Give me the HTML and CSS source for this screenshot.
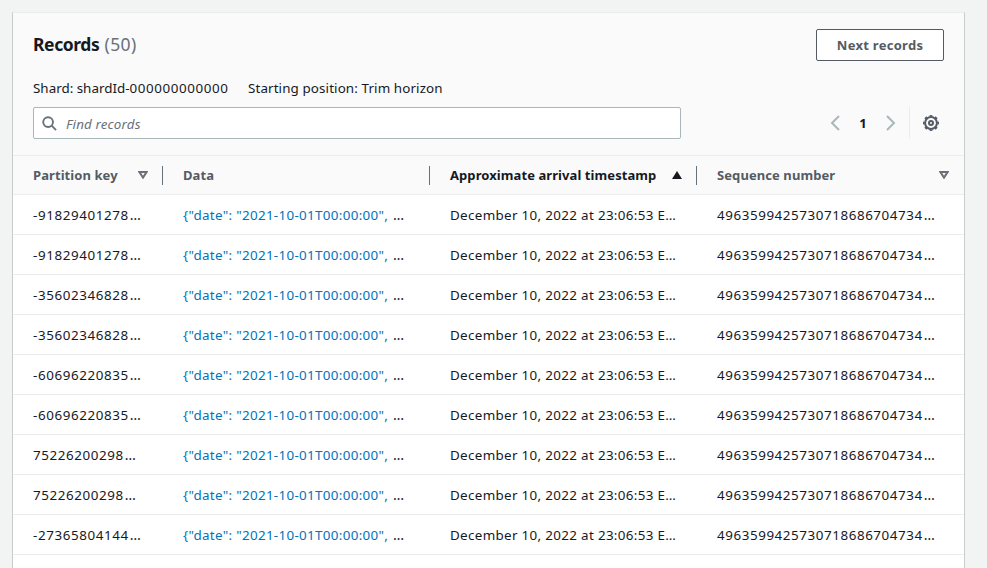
FILE: index.html
```html
<!DOCTYPE html>
<html lang="en">
<head>
<meta charset="utf-8">
<title>Records</title>
<link rel="stylesheet" href="styles.css">
</head>
<body>
<main class="card">
  <header class="head">
    <div class="title-row">
      <h2 class="title">Records <span class="count">(50)</span></h2>
      <button class="next">Next records</button>
    </div>
    <div class="info"><span class="shard">Shard: shardId-<span class="digits">000000000000</span></span><span class="position">Starting position: Trim horizon</span></div>
    <div class="tools">
      <div class="search">
        <svg class="lens" viewBox="0 0 16 16"><circle cx="6.5" cy="6.5" r="5.2"/><path d="M10.3 10.3 15 15"/></svg>
        <span class="placeholder">Find records</span>
      </div>
      <nav class="pages">
        <svg class="arrow" viewBox="0 0 10 16"><path d="M9 1 2 8l7 7"/></svg>
        <b class="page">1</b>
        <svg class="arrow" viewBox="0 0 10 16"><path d="m1 1 7 7-7 7"/></svg>
      </nav>
      <div class="settings">
        <svg class="gear" viewBox="0 0 16 16"><circle cx="8" cy="8" r="5.9"/><circle class="teeth" cx="8" cy="8" r="7.2" pathLength="80"/><circle cx="8" cy="8" r="2"/></svg>
      </div>
    </div>
  </header>
  <section class="table">
    <div class="row labels">
      <div class="cell"><span>Partition key</span><svg class="sort" viewBox="0 0 10 8"><path d="M1.400 1h7.200L5 6.600z"/></svg></div>
      <div class="cell"><span>Data</span></div>
      <div class="cell sorted"><span>Approximate arrival timestamp</span><svg class="sort" viewBox="0 0 10 8"><path class="solid" d="M0 8h10L5 0z"/></svg></div>
      <div class="cell"><span>Sequence number</span><svg class="sort" viewBox="0 0 10 8"><path d="M1.400 1h7.200L5 6.600z"/></svg></div>
    </div>
    <div class="row"><div class="cell key">-91829401278<span class="dots">…</span></div><div class="cell data"><a>{"date": "2021-10-01T00:00:00",</a> <span class="dots">…</span></div><div class="cell time">December 10, 2022 at 23:06:53 E…</div><div class="cell seq">4963599425730718686704734<span class="dots">…</span></div></div>
    <div class="row"><div class="cell key">-91829401278<span class="dots">…</span></div><div class="cell data"><a>{"date": "2021-10-01T00:00:00",</a> <span class="dots">…</span></div><div class="cell time">December 10, 2022 at 23:06:53 E…</div><div class="cell seq">4963599425730718686704734<span class="dots">…</span></div></div>
    <div class="row"><div class="cell key">-35602346828<span class="dots">…</span></div><div class="cell data"><a>{"date": "2021-10-01T00:00:00",</a> <span class="dots">…</span></div><div class="cell time">December 10, 2022 at 23:06:53 E…</div><div class="cell seq">4963599425730718686704734<span class="dots">…</span></div></div>
    <div class="row"><div class="cell key">-35602346828<span class="dots">…</span></div><div class="cell data"><a>{"date": "2021-10-01T00:00:00",</a> <span class="dots">…</span></div><div class="cell time">December 10, 2022 at 23:06:53 E…</div><div class="cell seq">4963599425730718686704734<span class="dots">…</span></div></div>
    <div class="row"><div class="cell key">-60696220835<span class="dots">…</span></div><div class="cell data"><a>{"date": "2021-10-01T00:00:00",</a> <span class="dots">…</span></div><div class="cell time">December 10, 2022 at 23:06:53 E…</div><div class="cell seq">4963599425730718686704734<span class="dots">…</span></div></div>
    <div class="row"><div class="cell key">-60696220835<span class="dots">…</span></div><div class="cell data"><a>{"date": "2021-10-01T00:00:00",</a> <span class="dots">…</span></div><div class="cell time">December 10, 2022 at 23:06:53 E…</div><div class="cell seq">4963599425730718686704734<span class="dots">…</span></div></div>
    <div class="row"><div class="cell key">75226200298<span class="dots">…</span></div><div class="cell data"><a>{"date": "2021-10-01T00:00:00",</a> <span class="dots">…</span></div><div class="cell time">December 10, 2022 at 23:06:53 E…</div><div class="cell seq">4963599425730718686704734<span class="dots">…</span></div></div>
    <div class="row"><div class="cell key">75226200298<span class="dots">…</span></div><div class="cell data"><a>{"date": "2021-10-01T00:00:00",</a> <span class="dots">…</span></div><div class="cell time">December 10, 2022 at 23:06:53 E…</div><div class="cell seq">4963599425730718686704734<span class="dots">…</span></div></div>
    <div class="row"><div class="cell key">-27365804144<span class="dots">…</span></div><div class="cell data"><a>{"date": "2021-10-01T00:00:00",</a> <span class="dots">…</span></div><div class="cell time">December 10, 2022 at 23:06:53 E…</div><div class="cell seq">4963599425730718686704734<span class="dots">…</span></div></div>
  </section>
</main>
</body>
</html>
```
FILE: styles.css
```css
* { box-sizing: border-box; }
html, body { height: 100%; }
body { margin: 0; padding: 12px 22px 0 12px; overflow: hidden; background: #f2f3f3; color: #16191f; font: 13.4px/20px "Noto Sans", sans-serif; }
.card { height: 100%; background: #fff; border: 1px solid #eaeded; border-width: 1px 1px 0; border-left-color: #c8cccc; border-right-color: #c8cccc; }
.head { height: 143px; padding: 16px 20px 0; background: #fafafa; border-bottom: 1px solid #eaeded; }
.title-row { display: flex; justify-content: space-between; height: 32px; }
.title { margin: 0; font-size: 17.5px; line-height: 30px; font-weight: 700; letter-spacing: -.4px; white-space: nowrap; }
.count { margin-left: 1px; font-weight: 400; letter-spacing: .4px; color: #687078; }
.next { width: 128px; height: 32px; padding: 0; border: 1px solid #545b64; border-radius: 2px; background: #fff; color: #545b64; font: 700 13px/20px "Noto Sans", sans-serif; letter-spacing: .28px; }
.info { display: flex; margin-top: 17px; height: 20px; white-space: nowrap; }
.shard { width: 215px; }
.digits { letter-spacing: .6px; }
.position { letter-spacing: .11px; }
.tools { display: flex; align-items: center; margin-top: 9px; height: 32px; }
.search { display: flex; align-items: center; width: 648px; height: 32px; padding: 0 8px; border: 1px solid #aab7b8; border-radius: 2px; background: #fff; }
.lens { width: 15px; height: 15px; margin-right: 9px; fill: none; stroke: #687078; stroke-width: 2; }
.placeholder { padding-top: 2px; font-style: italic; letter-spacing: .15px; color: #687078; }
.pages { display: flex; align-items: center; margin-left: 149px; }
.arrow { width: 10px; height: 16px; fill: none; stroke: #aab7b8; stroke-width: 2; }
.page { width: 46px; text-align: center; font-size: 13px; }
.settings { display: flex; align-items: center; height: 32px; margin-left: 13px; padding-left: 13px; border-left: 1px solid #eaeded; }
.gear { width: 16px; height: 16px; fill: none; stroke: #545b64; stroke-width: 2; }
.gear .teeth { stroke-width: 1.6; stroke-dasharray: 5 5; stroke-dashoffset: 2.5; }
.row { display: grid; grid-template-columns: 150px 267px 267px 1fr; height: 40px; border-bottom: 1px solid #eaeded; align-items: center; white-space: nowrap; }
.cell { padding-left: 20px; line-height: 20px; }
.labels { height: 39px; background: #fafafa; color: #545b64; font-size: 13px; font-weight: 700; letter-spacing: .08px; }
.labels .cell { display: flex; align-items: center; justify-content: space-between; height: 19px; padding-right: 14px; border-right: 1px solid #687078; }
.labels .cell:last-child { border-right: 0; padding-right: 15px; }
.labels .sorted { color: #16191f; }
.sort { width: 10px; height: 8px; fill: none; stroke: #687078; stroke-width: 2; }
.solid { fill: #16191f; stroke: none; }
.key { letter-spacing: .6px; }
.seq { letter-spacing: .57px; }
.data { letter-spacing: .32px; }
.data a { color: #0073bb; }
.time { letter-spacing: .33px; }
.dots { margin-left: 1px; font-size: 14px; line-height: 1; letter-spacing: 0; }
```
